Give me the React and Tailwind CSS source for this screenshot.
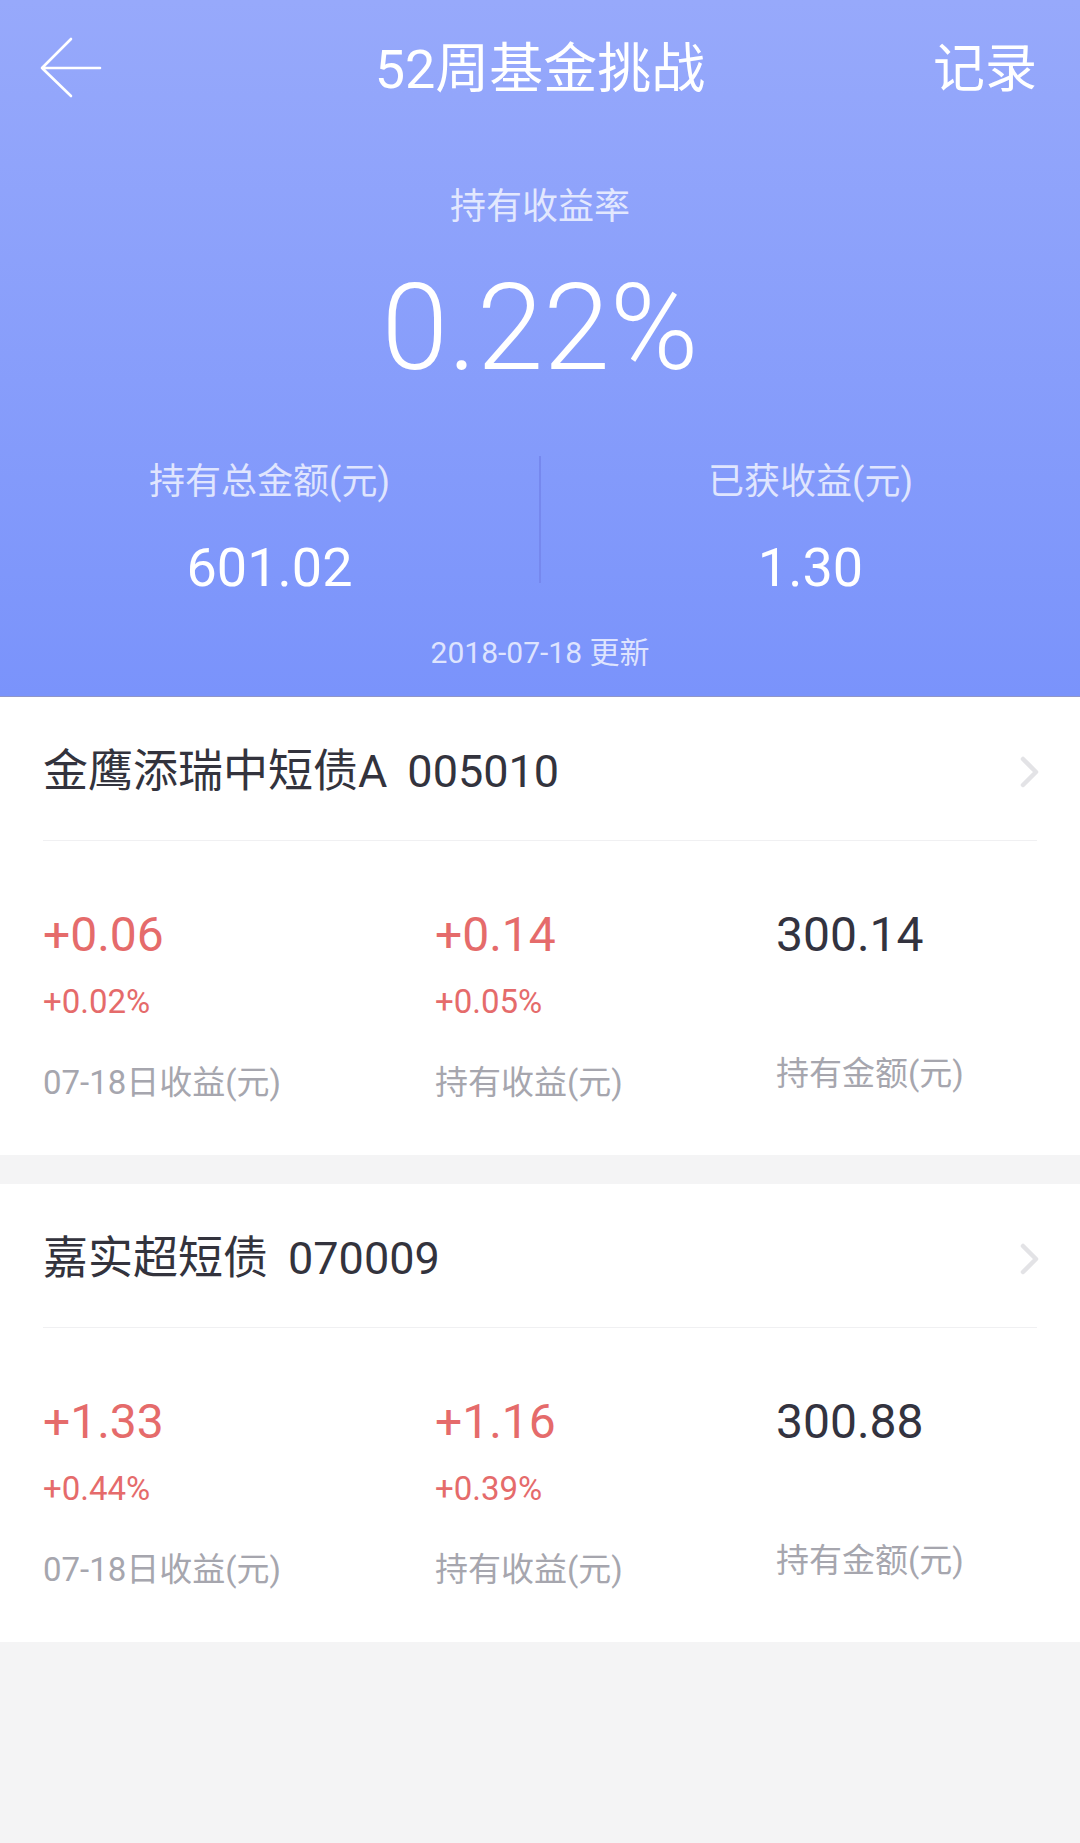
const font = { fontFamily: "Roboto, 'Noto Sans CJK SC', sans-serif" };

const funds = [
  {
    name: "金鹰添瑞中短债A",
    code: "005010",
    day: "+0.06",
    dayPct: "+0.02%",
    hold: "+0.14",
    holdPct: "+0.05%",
    amount: "300.14",
  },
  {
    name: "嘉实超短债",
    code: "070009",
    day: "+1.33",
    dayPct: "+0.44%",
    hold: "+1.16",
    holdPct: "+0.39%",
    amount: "300.88",
  },
];

const BackArrow = () => (
  <svg width="62" height="62" viewBox="0 0 62 62" fill="none">
    <path
      d="M2 31 H60 M2 31 L31 2 M2 31 L31 59"
      stroke="white"
      strokeWidth="2.6"
      strokeLinecap="round"
      strokeLinejoin="round"
    />
  </svg>
);

const Chevron = () => (
  <svg width="22" height="34" viewBox="0 0 22 34" fill="none">
    <path
      d="M4 4 L17 17 L4 30"
      stroke="#e3e3e6"
      strokeWidth="4.5"
      strokeLinecap="round"
      strokeLinejoin="round"
    />
  </svg>
);

const Stat = ({ value, pct, label }) => (
  <div className="flex flex-col">
    <div className="text-[48px] leading-[56px] text-[#e56b6b]">{value}</div>
    <div className="mt-[19px] text-[33px] leading-[40px] text-[#e56b6b]">{pct}</div>
    <div className="mt-[39px] text-[33px] leading-[44px] text-[#a6a6ae]">{label}</div>
  </div>
);

const FundCard = ({ fund }) => (
  <div className="bg-white px-[43px] pb-[50px]">
    <div className="flex h-[143px] items-center justify-between pt-[6px]">
      <div className="text-[45px] leading-[56px] text-[#33333d]">
        {fund.name}
        <span className="ml-[20px]">{fund.code}</span>
      </div>
      <div className="-mr-[4px]">
        <Chevron />
      </div>
    </div>
    <div className="h-px bg-[#f0f0f2]" />
    <div className="mt-[66px] grid grid-cols-[392px_341px_1fr]">
      <Stat value={fund.day} pct={fund.dayPct} label="07-18日收益(元)" />
      <Stat value={fund.hold} pct={fund.holdPct} label="持有收益(元)" />
      <div className="flex flex-col">
        <div className="text-[48px] leading-[56px] text-[#33333f]">{fund.amount}</div>
        <div className="mt-[89px] text-[33px] leading-[44px] text-[#a6a6ae]">持有金额(元)</div>
      </div>
    </div>
  </div>
);

export default function App() {
  return (
    <div style={font} className="min-h-[1843px] w-[1080px] bg-[#f4f4f5]">
      <div className="border-b border-[#9096c8] bg-gradient-to-b from-[#97a9fb] to-[#7a93fb] pb-[23px] text-white">
        <div className="relative flex h-[140px] items-center justify-center">
          <div className="absolute left-[40px] top-[37px]">
            <BackArrow />
          </div>
          <div className="text-[54px] leading-[64px]">52周基金挑战</div>
          <div className="absolute right-[43px] top-[38px] text-[52px] leading-[64px]">记录</div>
        </div>
        <div className="mt-[42px] text-center text-[36px] leading-[50px] text-white/75">持有收益率</div>
        <div className="mt-[36px] text-center text-[120px] font-light leading-[120px]">0.22%</div>
        <div className="mt-[69px] flex">
          <div className="flex flex-1 flex-col items-center">
            <div className="text-[36px] leading-[50px] text-white/75">持有总金额(元)</div>
            <div className="mt-[29px] text-[54px] leading-[64px]">601.02</div>
          </div>
          <div className="mt-[-1px] h-[127px] w-[2px] bg-[#7688ee]" />
          <div className="flex flex-1 flex-col items-center">
            <div className="text-[36px] leading-[50px] text-white/75">已获收益(元)</div>
            <div className="mt-[29px] text-[54px] leading-[64px]">1.30</div>
          </div>
        </div>
        <div className="mt-[33px] text-center text-[30px] leading-[40px] text-white/75">2018-07-18 更新</div>
      </div>
      <FundCard fund={funds[0]} />
      <div className="h-[29px]" />
      <FundCard fund={funds[1]} />
    </div>
  );
}
